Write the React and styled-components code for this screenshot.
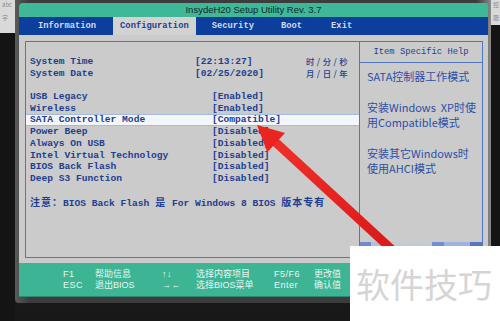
import React from 'react';
import styled, { createGlobalStyle } from 'styled-components';

const GlobalStyle = createGlobalStyle`
  html, body {
    margin: 0;
    padding: 0;
    background: #171717;
  }
  * { box-sizing: border-box; }
`;

const MONO = `"Liberation Mono", "Noto Sans CJK SC", monospace`;
const SANS = `"Liberation Sans", "Noto Sans CJK SC", sans-serif`;
const CJK = `"Noto Sans CJK SC", "Liberation Sans", sans-serif`;

const rows = [
  { label: 'USB Legacy', value: '[Enabled]' },
  { label: 'Wireless', value: '[Enabled]' },
  { label: 'SATA Controller Mode', value: '[Compatible]', active: true },
  { label: 'Power Beep', value: '[Disabled]' },
  { label: 'Always On USB', value: '[Disabled]' },
  { label: 'Intel Virtual Technology', value: '[Disabled]' },
  { label: 'BIOS Back Flash', value: '[Disabled]' },
  { label: 'Deep S3 Function', value: '[Disabled]' },
];

const tabs = [
  { name: 'Information', ml: 0 },
  { name: 'Configuration', ml: 10, active: true },
  { name: 'Security', ml: 9 },
  { name: 'Boot', ml: 13 },
  { name: 'Exit', ml: 15 },
];

const keys = [
  ['F1', '帮助信息', '↑↓', '选择内容项目', 'F5/F6', '更改值'],
  ['ESC', '退出BIOS', '→←', '选择BIOS菜单', 'Enter', '确认值'],
];

export default function App() {
  return (
    <>
      <GlobalStyle />
      <Page>
        <Side $w={15}>
          <DeskPatch $h={33}>
            <Tiny>abc</Tiny>
            <Tiny>字</Tiny>
          </DeskPatch>
        </Side>
        <Monitor>
          <Screen>
            <TitleBar>InsydeH20 Setup Utility Rev. 3.7</TitleBar>
            <TabBar>
              {tabs.map((t) => (
                <Tab key={t.name} $ml={t.ml} $active={t.active}>{t.name}</Tab>
              ))}
            </TabBar>
            <Body>
              <MainPanel>
                <Row>
                  <span>System Time</span>
                  <span>[22:13:27]</span>
                  <Unit>时/分/秒</Unit>
                </Row>
                <Row>
                  <span>System Date</span>
                  <span>[02/25/2020]</span>
                  <Unit>月/日/年</Unit>
                </Row>
                <Spacer />
                {rows.map((r) => (
                  <Row key={r.label} $active={r.active}>
                    <span>{r.label}</span>
                    <Value $indent>{r.value}</Value>
                  </Row>
                ))}
                <Spacer />
                <Note>
                  <Han>注意：</Han>BIOS Back Flash <Han>是</Han> For Windows 8 BIOS <Han>版本专有</Han>
                </Note>
              </MainPanel>
              <HelpPanel>
                <HelpHeader>Item Specific Help</HelpHeader>
                <HelpBody>
                  <HelpPara>SATA控制器工作模式</HelpPara>
                  <HelpPara>安装Windows{'\u00a0 '}XP时使<br />用Compatible模式</HelpPara>
                  <HelpPara>安装其它Windows时<br />使用AHCI模式</HelpPara>
                </HelpBody>
                <Mosaic />
              </HelpPanel>
            </Body>
            <Footer>
              {keys.flat().map((k, i) => (
                <FooterCell key={i} $key={i % 2 === 0}>{k}</FooterCell>
              ))}
            </Footer>
          </Screen>
        </Monitor>
        <Side $w={9}>
          <DeskPatch $h={25}>
            <Tiny>控</Tiny>
            <Tiny>跟</Tiny>
          </DeskPatch>
        </Side>
        <Arrow viewBox="0 0 500 321" width="500" height="321">
          <defs>
            <linearGradient id="shaft" x1="0" y1="0" x2="1" y2="1">
              <stop offset="0" stopColor="#f0302a" />
              <stop offset="1" stopColor="#d81818" />
            </linearGradient>
          </defs>
          <polygon
            points="270.9,144 277,137.4 403,253.7 396.9,260.3"
            fill="url(#shaft)"
          />
          <polygon points="257,125 285,133 267.3,152.2" fill="#ea2520" />
        </Arrow>
        <Watermark>软件技巧</Watermark>
      </Page>
    </>
  );
}

const Page = styled.div`
  position: relative;
  width: 500px;
  height: 321px;
  overflow: hidden;
  display: flex;
  align-items: flex-start;
  background:
    linear-gradient(180deg, rgba(255,255,255,0.03), rgba(0,0,0,0.1)),
    #1b1b1b;
`;

const Side = styled.div`
  width: ${(p) => p.$w}px;
  height: 321px;
  display: flex;
  flex-direction: column;
  background: #141414;
`;

const DeskPatch = styled.div`
  height: ${(p) => p.$h}px;
  background: #d9d9d9;
  display: flex;
  flex-direction: column;
  gap: 6px;
  padding: 1px 2px;
`;

const Tiny = styled.span`
  font-family: ${CJK};
  font-size: 6px;
  line-height: 7px;
  color: #8a8a8a;
`;

const Monitor = styled.div`
  width: 476px;
  height: 303px;
  padding: 3px 3px 6px 4px;
  background: linear-gradient(90deg, #5a5a5a, #3c3c3c 3%, #3c3c3c 97%, #8a8a8a);
  border-radius: 0 0 4px 4px;
`;

const Screen = styled.div`
  width: 469px;
  height: 294px;
  display: flex;
  flex-direction: column;
  border-radius: 4px 2px 0 0;
  overflow: hidden;
`;

const TitleBar = styled.div`
  height: 14px;
  background: #3eb897;
  color: #13262b;
  font-family: ${SANS};
  font-size: 9.5px;
  line-height: 14px;
  text-align: center;
`;

const TabBar = styled.div`
  height: 18px;
  background: #0c3e9d;
  display: flex;
  padding-left: 12px;
`;

const Tab = styled.div`
  margin-left: ${(p) => p.$ml}px;
  padding: 0 7px;
  background: ${(p) => (p.$active ? '#d2d2d2' : 'transparent')};
  color: ${(p) => (p.$active ? '#1f3e90' : '#d3dbec')};
  font-family: ${MONO};
  font-weight: bold;
  font-size: 8.8px;
  line-height: 18px;
`;

const Body = styled.div`
  flex: 1;
  background: #cbcbcb;
  padding: 6px 5px 5px 6px;
  display: grid;
  grid-template-columns: 334px 124px;
`;

const MainPanel = styled.div`
  border: 1px solid #4f76bf;
  border-right: none;
  padding-top: 14px;
  color: #213e90;
  font-family: ${MONO};
  font-weight: bold;
  font-size: 9.6px;
  line-height: 11.7px;
`;

const Row = styled.div`
  display: grid;
  grid-template-columns: 165px 111px 1fr;
  align-items: center;
  padding-left: 4px;
  height: 11.7px;
  white-space: nowrap;
  background: ${(p) => (p.$active ? '#f3f6fa' : 'transparent')};
  box-shadow: ${(p) => (p.$active ? 'inset 0 1px #a3bbe0, inset 0 -1px #a3bbe0' : 'none')};
`;

const Value = styled.span`
  padding-left: ${(p) => (p.$indent ? 17 : 0)}px;
`;

const Unit = styled.span`
  font-family: ${CJK};
  font-weight: 500;
  font-size: 8.4px;
  line-height: 11.7px;
  letter-spacing: 2.5px;
`;

const Spacer = styled.div`
  height: 11.7px;
`;

const Note = styled.div`
  padding-left: 4px;
  white-space: nowrap;
`;

const Han = styled.span`
  font-family: ${CJK};
  font-weight: 700;
  font-size: 10px;
  line-height: 11px;
  letter-spacing: 1px;
`;

const HelpPanel = styled.div`
  border: 1px solid #4f76bf;
  display: flex;
  flex-direction: column;
`;

const HelpHeader = styled.div`
  height: 21px;
  border-bottom: 1px solid #4f76bf;
  text-align: center;
  color: #24428f;
  font-family: ${MONO};
  font-size: 8.8px;
  line-height: 21px;
`;

const HelpBody = styled.div`
  padding: 6px 2px 0 7px;
  color: #2c4fa6;
  font-family: ${CJK};
  font-size: 11px;
  line-height: 15px;
  white-space: nowrap;
`;

const HelpPara = styled.p`
  margin: 0 0 16px;
`;

const Mosaic = styled.div`
  margin-top: auto;
  margin-bottom: 10px;
  height: 5px;
  background: linear-gradient(
    90deg,
    #6d8cce 0 11px,
    #b4c0da 11px 28px,
    #c4c8d2 28px 72px,
    #6f8fd0 72px 84px,
    #9fb2dc 84px 110px,
    #5577c4 110px 124px
  );
`;

const Footer = styled.div`
  height: 34px;
  background: #3db595;
  border-bottom: 1px solid #2b8a71;
  padding-left: 44px;
  display: grid;
  grid-template-columns: 32px 67px 34px 78px 40px auto;
  align-content: center;
  color: #eaf5f1;
  font-family: ${SANS};
  font-size: 9px;
  line-height: 10.5px;
`;

const FooterCell = styled.span`
  white-space: nowrap;
  letter-spacing: ${(p) => (p.$key ? '0.5px' : '0')};
`;

const Arrow = styled.svg`
  position: absolute;
  left: 0;
  top: 0;
  pointer-events: none;
`;

const Watermark = styled.div`
  position: absolute;
  left: 350px;
  top: 246px;
  width: 150px;
  height: 75px;
  background: #ffffff;
  padding-left: 6px;
  display: flex;
  align-items: center;
  color: #d5d5d5;
  font-family: ${CJK};
  font-size: 34px;
  font-weight: 400;
  white-space: nowrap;
`;
